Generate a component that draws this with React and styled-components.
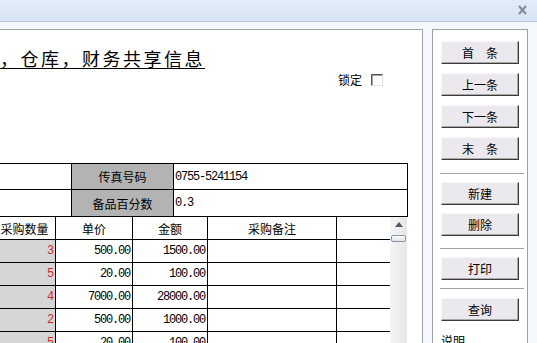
import React from "react";
import styled, { createGlobalStyle } from "styled-components";

const GlobalStyle = createGlobalStyle`
  html, body {
    margin: 0;
    padding: 0;
  }
  body {
    background: #f4f7fb;
    font-family: "Noto Sans CJK SC", sans-serif;
    font-size: 12px;
    color: #000;
  }
`;

const Window = styled.div`
  width: 537px;
  height: 343px;
  overflow: hidden;
  display: flex;
  flex-direction: column;
  background: #f4f7fb;
`;

const TitleBar = styled.div`
  flex-shrink: 0;
  height: 16px;
  border-bottom: 1px solid #b6c7dd;
  background: linear-gradient(#e4ecf8, #d7e3f3);
  display: flex;
  justify-content: flex-end;
  align-items: flex-start;
  padding: 5px 10px 0 0;
`;

const Body = styled.div`
  flex: 1;
  min-height: 0;
  display: flex;
  padding-top: 7px;
`;

const FormPanel = styled.div`
  width: 422px;
  flex-shrink: 0;
  border-top: 1px solid #a0a0a0;
  border-right: 1px solid #a0a0a0;
  background: #fff;
  overflow: hidden;
`;

const Content = styled.div`
  margin-left: -6px;
  width: 428px;
`;

const Title = styled.div`
  margin-top: 19px;
  padding-left: 6px;
  font-size: 18px;
  line-height: 18px;
  letter-spacing: 2.5px;
  white-space: nowrap;
  text-decoration: underline;
  text-decoration-thickness: 1px;
  text-underline-offset: 2px;
`;

const LockRow = styled.div`
  display: flex;
  justify-content: flex-end;
  align-items: center;
  gap: 9px;
  height: 14px;
  margin-top: 6px;
  padding-right: 39px;
  line-height: 12px;
`;

const CheckBox = styled.span`
  width: 12px;
  height: 12px;
  box-sizing: border-box;
  background: #fff;
  border: 1px solid;
  border-color: #555 #e2e2e2 #e2e2e2 #555;
  box-shadow: inset 1px 1px #a0a0a0;
`;

const InfoTable = styled.div`
  margin-top: 76px;
  width: 414px;
`;

const InfoRow = styled.div`
  display: flex;
  height: ${(p) => p.$h}px;
  border-top: 1px solid #000;
`;

const InfoCell = styled.div`
  width: ${(p) => p.$w}px;
  box-sizing: border-box;
  border-right: 1px solid #000;
  background: ${(p) => (p.$label ? "#b3b3b3" : "#fff")};
  display: flex;
  align-items: center;
  justify-content: ${(p) => (p.$label ? "center" : "flex-start")};
  padding-left: ${(p) => (p.$label ? 0 : 1)}px;
`;

const Mono = styled.span`
  font-family: "Liberation Mono", "Noto Sans CJK SC", monospace;
  font-size: 12px;
  letter-spacing: -1.2px;
  color: ${(p) => p.$color || "#000"};
`;

const GridWrap = styled.div`
  display: flex;
  width: 414px;
  border-top: 1px solid #000;
`;

const Grid = styled.div`
  width: 396px;
`;

const GridRow = styled.div`
  display: flex;
  height: 22px;
  border-bottom: 1px solid #000;
`;

const GridCell = styled.div`
  width: ${(p) => p.$w}px;
  box-sizing: border-box;
  border-right: ${(p) => (p.$last ? "none" : "1px solid #000")};
  background: ${(p) => (p.$shade ? "#d6d6d6" : "#fff")};
  display: flex;
  align-items: center;
  justify-content: ${(p) => (p.$head ? "center" : "flex-end")};
  padding-right: ${(p) => (p.$head ? 0 : 2)}px;
  white-space: nowrap;
`;

const Scrollbar = styled.div`
  width: 17px;
  background: linear-gradient(to right, #f5f5f5, #e7e7e7);
  display: flex;
  flex-direction: column;
  align-items: center;
  padding-top: 5px;
`;

const ArrowUp = styled.div`
  width: 0;
  height: 0;
  border-left: 4px solid transparent;
  border-right: 4px solid transparent;
  border-bottom: 5px solid #4d5d70;
`;

const Thumb = styled.div`
  margin-top: 8px;
  width: 15px;
  height: 7px;
  box-sizing: border-box;
  border: 1px solid #8797aa;
  border-radius: 2px;
  background: linear-gradient(#fdfdfd, #dde3ea);
`;

const SidePanel = styled.div`
  margin-left: 9px;
  width: 96px;
  flex-shrink: 0;
  box-sizing: border-box;
  border: 1px solid #a0a0a0;
  border-bottom: none;
  background: #fff;
  padding: 11px 0 0 8px;
  display: flex;
  flex-direction: column;
  align-items: flex-start;
  overflow: hidden;

  & > * {
    flex-shrink: 0;
  }
`;

const ButtonGroup = styled.div`
  display: flex;
  flex-direction: column;
  gap: ${(p) => p.$gap}px;
  margin-top: ${(p) => p.$top || 0}px;
`;

const Button = styled.button`
  flex-shrink: 0;
  width: 78px;
  height: 23px;
  box-sizing: border-box;
  padding: 0;
  border: 1px solid;
  border-color: #f7f7f7 #3a3a3a #3a3a3a #f7f7f7;
  box-shadow: inset -1px -1px #a9a9a9;
  background: #ebe9ee;
  font-family: "Noto Sans CJK SC", sans-serif;
  font-size: 12px;
  line-height: 12px;
  color: #000;
`;

const Separator = styled.div`
  width: 84px;
  height: 1px;
  margin-left: -1px;
  margin-top: ${(p) => p.$top}px;
  background: #a4a4a4;
`;

const Note = styled.div`
  margin-top: 14px;
  line-height: 12px;
`;

const cols = [62, 77, 75, 129, 53];

const rows = [
  ["3", "500.00", "1500.00"],
  ["5", "20.00", "100.00"],
  ["4", "7000.00", "28000.00"],
  ["2", "500.00", "1000.00"],
  ["5", "20.00", "100.00"],
];

function CloseIcon() {
  return (
    <svg width="9" height="10" viewBox="0 0 9 10">
      <path d="M1 1 L8 9 M8 1 L1 9" stroke="#7d8b9c" strokeWidth="2" />
    </svg>
  );
}

export default function App() {
  return (
    <Window>
      <GlobalStyle />
      <TitleBar>
        <CloseIcon />
      </TitleBar>
      <Body>
        <FormPanel>
          <Content>
            <Title>，仓库，财务共享信息</Title>
            <LockRow>
              <span>锁定</span>
              <CheckBox />
            </LockRow>
            <InfoTable>
              <InfoRow $h={25}>
                <InfoCell $w={78} />
                <InfoCell $w={102} $label>传真号码</InfoCell>
                <InfoCell $w={234}>
                  <Mono>0755-5241154</Mono>
                </InfoCell>
              </InfoRow>
              <InfoRow $h={26}>
                <InfoCell $w={78} />
                <InfoCell $w={102} $label>备品百分数</InfoCell>
                <InfoCell $w={234}>
                  <Mono>0.3</Mono>
                </InfoCell>
              </InfoRow>
            </InfoTable>
            <GridWrap>
              <Grid>
                <GridRow>
                  <GridCell $w={cols[0]} $head>采购数量</GridCell>
                  <GridCell $w={cols[1]} $head>单价</GridCell>
                  <GridCell $w={cols[2]} $head>金额</GridCell>
                  <GridCell $w={cols[3]} $head>采购备注</GridCell>
                  <GridCell $w={cols[4]} $head $last />
                </GridRow>
                {rows.map((r, i) => (
                  <GridRow key={i}>
                    <GridCell $w={cols[0]} $shade>
                      <Mono $color="#d22a2a">{r[0]}</Mono>
                    </GridCell>
                    <GridCell $w={cols[1]}>
                      <Mono>{r[1]}</Mono>
                    </GridCell>
                    <GridCell $w={cols[2]}>
                      <Mono>{r[2]}</Mono>
                    </GridCell>
                    <GridCell $w={cols[3]} />
                    <GridCell $w={cols[4]} $last />
                  </GridRow>
                ))}
              </Grid>
              <Scrollbar>
                <ArrowUp />
                <Thumb />
              </Scrollbar>
            </GridWrap>
          </Content>
        </FormPanel>
        <SidePanel>
          <ButtonGroup $gap={9}>
            <Button>首　条</Button>
            <Button>上一条</Button>
            <Button>下一条</Button>
            <Button>末　条</Button>
          </ButtonGroup>
          <Separator $top={13} />
          <ButtonGroup $gap={8} $top={8}>
            <Button>新建</Button>
            <Button>删除</Button>
          </ButtonGroup>
          <Separator $top={12} />
          <ButtonGroup $gap={8} $top={8}>
            <Button>打印</Button>
          </ButtonGroup>
          <Separator $top={8} />
          <ButtonGroup $gap={8} $top={9}>
            <Button>查询</Button>
          </ButtonGroup>
          <Note>说明</Note>
        </SidePanel>
      </Body>
    </Window>
  );
}
